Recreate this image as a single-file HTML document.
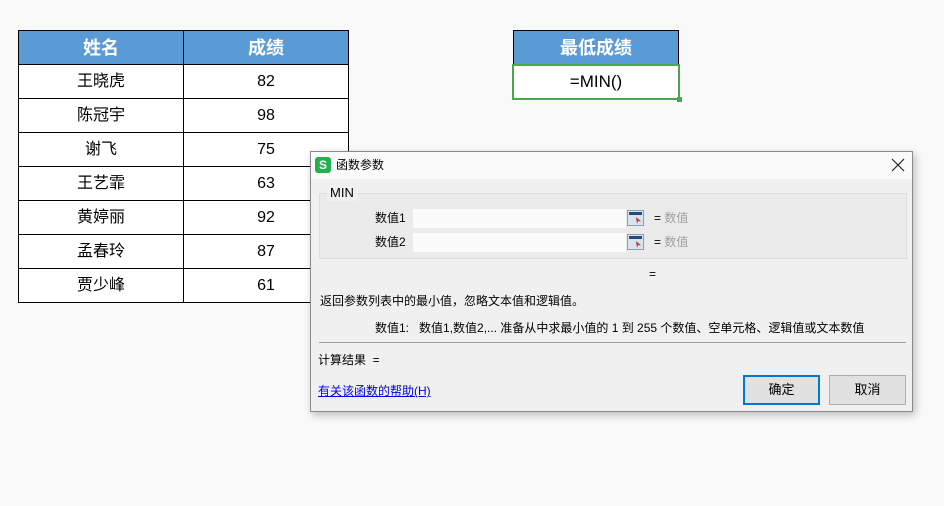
<!DOCTYPE html>
<html><head><meta charset="utf-8"><style>
*{margin:0;padding:0;box-sizing:border-box}
body{width:944px;height:506px;background:#f9f9f9;position:relative;overflow:hidden;font-family:"Liberation Sans","Noto Sans CJK SC",sans-serif;color:#000}
.a{position:absolute}
table{position:absolute;border-collapse:collapse}
td{border:1px solid #000;text-align:center;font-size:16px;height:34px;width:165px;background:#fff;line-height:18px;padding:0}
th{border:1px solid #000;background:#5b9bd5;color:#fff;font-size:18px;font-weight:bold;height:34px;width:165px;line-height:20px;padding:0}
.dlg{left:310px;top:151px;width:603px;height:261px;background:#f0f0f0;border:1px solid #8a8a8a;box-shadow:2px 3px 8px rgba(0,0,0,.25);font-size:12px;line-height:16px}
.inp{background:#fbfbfb;height:19px;width:213px;left:102px}
.ic{width:17px;height:16px;background:#d8e4f0;border:1px solid #8aa0b8;left:316px}
.ic:before{content:"";position:absolute;left:1px;top:1px;width:13px;height:3px;background:#2a4a7a}
.ic:after{content:"";position:absolute;left:8px;top:6px;width:5px;height:7px;background:#c0392b;clip-path:polygon(0 0,100% 60%,40% 60%,20% 100%)}
.btn{top:223px;height:30px;width:77px;background:#e1e1e1;border:1px solid #adadad;text-align:center;line-height:28px;font-size:13px}
.g{color:#a0a0a0}
</style></head><body>
<table style="left:18px;top:30px">
<tr><th>姓名</th><th>成绩</th></tr>
<tr><td>王晓虎</td><td>82</td></tr>
<tr><td>陈冠宇</td><td>98</td></tr>
<tr><td>谢飞</td><td>75</td></tr>
<tr><td>王艺霏</td><td>63</td></tr>
<tr><td>黄婷丽</td><td>92</td></tr>
<tr><td>孟春玲</td><td>87</td></tr>
<tr><td>贾少峰</td><td>61</td></tr>
</table>
<table style="left:513px;top:30px"><tr><th>最低成绩</th></tr></table>
<div class="a" style="left:512px;top:64px;width:168px;height:36px;border:2px solid #4ca64c;background:#fff;text-align:center;line-height:32px;font-size:17px">=MIN()</div>
<div class="a" style="left:677px;top:97px;width:5px;height:5px;background:#4ca64c"></div>

<div class="a dlg">
 <div class="a" style="left:0;top:0;width:601px;height:27px;background:#fafafa"></div>
 <div class="a" style="left:4px;top:5px;width:16px;height:16px;background:#22b14c;border-radius:3px;color:#fff;font-weight:bold;font-size:12px;text-align:center;line-height:16px">S</div>
 <div class="a" style="left:25px;top:5px;font-size:12px">函数参数</div>
 <svg class="a" style="left:580px;top:6px" width="14" height="14"><path d="M1 1L13 13M13 1L1 13" stroke="#222" stroke-width="1.2"/></svg>
 <div class="a" style="left:8px;top:41px;width:588px;height:66px;border:1px solid #dcdcdc;background:#ebebeb"></div>
 <div class="a" style="left:16px;top:33px;padding:0 3px;background:#f0f0f0;font-size:13px">MIN</div>
 <div class="a" style="left:64px;top:58px">数值1</div>
 <div class="a" style="left:64px;top:82px">数值2</div>
 <div class="a inp" style="top:57px"></div>
 <div class="a inp" style="top:81px"></div>
 <div class="a ic" style="top:58px"></div>
 <div class="a ic" style="top:82px"></div>
 <div class="a" style="left:343px;top:58px">= <span class="g">数值</span></div>
 <div class="a" style="left:343px;top:82px">= <span class="g">数值</span></div>
 <div class="a" style="left:338px;top:114px">=</div>
 <div class="a" style="left:9px;top:141px">返回参数列表中的最小值，忽略文本值和逻辑值。</div>
 <div class="a" style="left:64px;top:168px">数值1:&nbsp;&nbsp; 数值1,数值2,... 准备从中求最小值的 1 到 255 个数值、空单元格、逻辑值或文本数值</div>
 <div class="a" style="left:8px;top:190px;width:587px;height:1px;background:#a0a0a0"></div>
 <div class="a" style="left:7px;top:200px">计算结果 &nbsp;=</div>
 <div class="a" style="left:7px;top:231px;color:#0000ee;text-decoration:underline">有关该函数的帮助(H)</div>
 <div class="a btn" style="left:432px;border:2px solid #0078d7;line-height:26px">确定</div>
 <div class="a btn" style="left:518px">取消</div>
</div>
</body></html>
